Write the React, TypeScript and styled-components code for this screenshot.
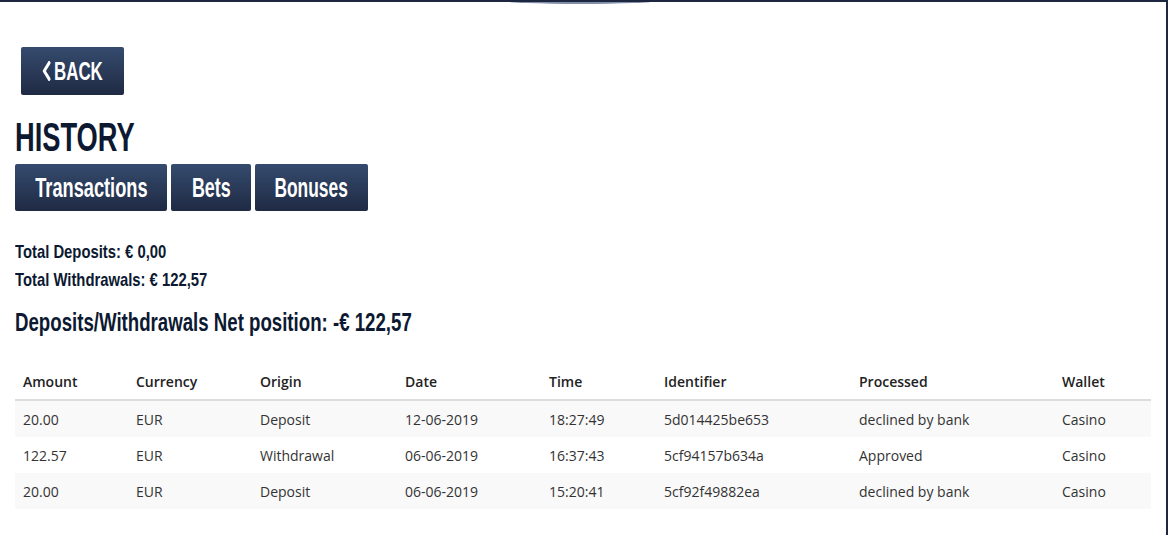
import styled, { createGlobalStyle } from 'styled-components';

const GlobalStyle = createGlobalStyle`
  html, body {
    margin: 0;
    padding: 0;
    background: #ffffff;
  }
  * {
    box-sizing: border-box;
  }
`;

const transactions = [
  { amount: '20.00', currency: 'EUR', origin: 'Deposit', date: '12-06-2019', time: '18:27:49', id: '5d014425be653', processed: 'declined by bank', wallet: 'Casino' },
  { amount: '122.57', currency: 'EUR', origin: 'Withdrawal', date: '06-06-2019', time: '16:37:43', id: '5cf94157b634a', processed: 'Approved', wallet: 'Casino' },
  { amount: '20.00', currency: 'EUR', origin: 'Deposit', date: '06-06-2019', time: '15:20:41', id: '5cf92f49882ea', processed: 'declined by bank', wallet: 'Casino' },
];

const columns = [
  { label: 'Amount', key: 'amount', width: 113 },
  { label: 'Currency', key: 'currency', width: 124 },
  { label: 'Origin', key: 'origin', width: 145 },
  { label: 'Date', key: 'date', width: 144 },
  { label: 'Time', key: 'time', width: 115 },
  { label: 'Identifier', key: 'id', width: 195 },
  { label: 'Processed', key: 'processed', width: 203 },
  { label: 'Wallet', key: 'wallet', width: 97 },
] as const;

const tabs = [
  { label: 'Transactions', width: 152, sx: 0.65 },
  { label: 'Bets', width: 80, sx: 0.64 },
  { label: 'Bonuses', width: 113, sx: 0.62 },
];

function App() {
  return (
    <>
      <GlobalStyle />
      <Frame>
        <TopGlow />
        <Page>
          <BackButton>
            <Condensed $sx={0.65} $origin="center">
              <Chevron viewBox="0 0 13 20">
                <path d="M10.5 2 L3 10 L10.5 18" />
              </Chevron>
              BACK
            </Condensed>
          </BackButton>
          <Title>
            <Condensed $sx={0.665}>HISTORY</Condensed>
          </Title>
          <Tabs>
            {tabs.map((t) => (
              <Tab key={t.label} $width={t.width}>
                <Condensed $sx={t.sx} $origin="center">
                  {t.label}
                </Condensed>
              </Tab>
            ))}
          </Tabs>
          <Totals>
            <TotalLine>
              <Condensed $sx={0.78}>Total Deposits: € 0,00</Condensed>
            </TotalLine>
            <TotalLine>
              <Condensed $sx={0.78}>Total Withdrawals: € 122,57</Condensed>
            </TotalLine>
          </Totals>
          <NetPosition>
            <Condensed $sx={0.746}>Deposits/Withdrawals Net position: -€ 122,57</Condensed>
          </NetPosition>
          <Table>
            <colgroup>
              {columns.map((c) => (
                <col key={c.key} style={{ width: c.width }} />
              ))}
            </colgroup>
            <thead>
              <tr>
                {columns.map((c) => (
                  <Th key={c.key}>{c.label}</Th>
                ))}
              </tr>
            </thead>
            <tbody>
              {transactions.map((t, i) => (
                <Row key={t.id} $striped={i % 2 === 0}>
                  {columns.map((c) => (
                    <Td key={c.key}>{t[c.key]}</Td>
                  ))}
                </Row>
              ))}
            </tbody>
          </Table>
        </Page>
      </Frame>
    </>
  );
}

export default App;

// no condensed face installed, so Arial-metric bold is squeezed to look like the headline font
const headline = `"Liberation Sans", Arial, sans-serif`;

const Frame = styled.div`
  position: relative;
  min-height: 100vh;
  border-top: 2px solid #1d2840;
  border-right: 2px solid #1d2840;
  overflow: hidden;
`;

const TopGlow = styled.div`
  position: absolute;
  top: -4px;
  left: 505px;
  width: 150px;
  height: 6px;
  border-radius: 50%;
  background: #2d4370;
  opacity: 0.6;
`;

const Page = styled.div`
  padding: 45px 15px 0 15px;
  font-family: ${headline};
  font-weight: 700;
  color: #0c1931;
`;

const Condensed = styled.span<{ $sx: number; $origin?: string }>`
  display: inline-flex;
  align-items: center;
  white-space: nowrap;
  transform: scaleX(${(p) => p.$sx});
  transform-origin: ${(p) => p.$origin ?? 'left'} center;
`;

const navyButton = `
  display: inline-flex;
  align-items: center;
  justify-content: center;
  border: none;
  border-radius: 2px;
  padding: 0;
  background: linear-gradient(to bottom, #354b6e 0%, #1f2a43 100%);
  color: #ffffff;
  font-family: ${headline};
  font-weight: 700;
  cursor: pointer;
`;

const BackButton = styled.button`
  ${navyButton}
  margin-left: 6px;
  width: 103px;
  height: 48px;
  font-size: 26px;
`;

const Chevron = styled.svg`
  width: 13px;
  height: 20px;
  margin-right: 5px;
  fill: none;
  stroke: #ffffff;
  stroke-width: 4;
  stroke-linecap: square;
`;

const Title = styled.h1`
  margin: 22px 0 7px;
  height: 40px;
  font-size: 41px;
  line-height: 40px;
  font-weight: 700;
`;

const Tabs = styled.div`
  display: flex;
  gap: 4px;
`;

const Tab = styled.button<{ $width: number }>`
  ${navyButton}
  width: ${(p) => p.$width}px;
  height: 47px;
  font-size: 28px;
`;

const Totals = styled.div`
  margin-top: 27px;
  display: flex;
  flex-direction: column;
`;

const TotalLine = styled.div`
  height: 28px;
  font-size: 19px;
  line-height: 28px;
`;

const NetPosition = styled.h3`
  margin: 13px 0 25px;
  height: 30px;
  font-size: 25px;
  line-height: 30px;
  font-weight: 700;
`;

const Table = styled.table`
  width: 1136px;
  border-collapse: collapse;
  table-layout: fixed;
  font-family: "Open Sans", sans-serif;
  font-size: 14px;
  font-weight: 400;
  color: #333333;
`;

const Th = styled.th`
  text-align: left;
  font-weight: 600;
  padding: 8px;
  height: 38px;
  vertical-align: bottom;
  border-bottom: 2px solid #dddddd;
  color: #222222;
`;

const Row = styled.tr<{ $striped: boolean }>`
  background: ${(p) => (p.$striped ? '#f9f9f9' : '#ffffff')};
  & + & td {
    border-top: 1px solid #dddddd;
  }
`;

const Td = styled.td`
  padding: 9px 8px 7px;
  height: 36px;
  line-height: 20px;
`;
